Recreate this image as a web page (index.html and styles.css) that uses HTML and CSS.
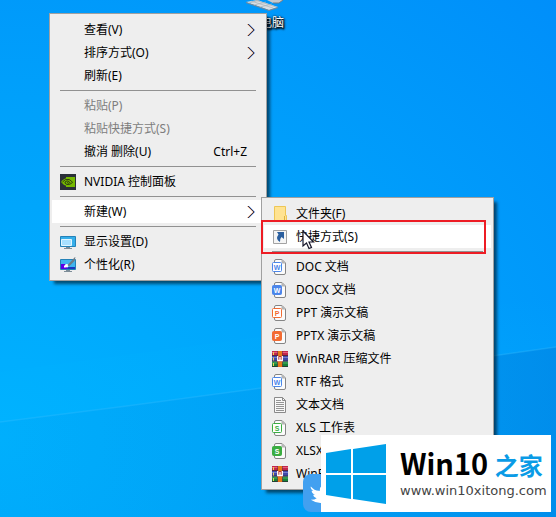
FILE: index.html
```html
<!DOCTYPE html>
<html lang="zh-CN">
<head>
<meta charset="utf-8">
<meta name="viewport" content="width=device-width, initial-scale=1">
<title>新建快捷方式</title>
<link rel="stylesheet" href="styles.css">
</head>
<body>
<svg class="defs" aria-hidden="true">
  <symbol id="chevron" viewBox="0 0 9 14">
    <path d="M.5 1L6.500 7L.5 13" fill="none" stroke="#e08a4a" stroke-width="1"/>
    <path d="M1.500 1L7.500 7L1.500 13" fill="none" stroke="#3f7fe0" stroke-width="1"/>
    <path d="M1 1L7 7L1 13" fill="none" stroke="#2a1c2c" stroke-width=".8"/>
  </symbol>
  <symbol id="page" viewBox="0 0 16 16">
    <path d="M4 .5H10L13.500 4V14Q13.500 15.500 12 15.500H4Q2.500 15.500 2.500 14V2Q2.500 .5 4 .5Z" fill="#fbfbfb" stroke="#858585"/>
    <path d="M9.500 .5V3.500Q9.500 4.500 10.500 4.500H13.500L10 .5Z" fill="#b4b4b4"/>
  </symbol>
  <symbol id="rar" viewBox="0 0 16 16">
    <path d="M0 0H16V5H0Z" fill="#c2264c"/><path d="M0 1H16V2H0Z" fill="#e4607b"/>
    <path d="M0 5H16V10.500H0Z" fill="#4049a8"/><path d="M0 6H16V7H0Z" fill="#737cd0"/>
    <path d="M0 10.500H16V16H0Z" fill="#168238"/><path d="M0 11.500H16V12.500H0Z" fill="#4eb267"/>
    <path d="M0 4.500H16M0 10H16M0 15.500H16" stroke="#2c2430" stroke-width=".7"/>
    <path d="M1 1H2V4H1ZM1 6.500H2V9.500H1ZM1 12H2V15H1Z" fill="#f0cf55"/>
    <path d="M6 0H10V16H6Z" fill="#e87818"/><path d="M5.500 0V16M10.500 0V16" stroke="#6b3040" stroke-width=".6"/>
    <path d="M5 5H11V10.500H5Z" fill="#b8302c"/>
    <path d="M5.700 5V9.500H10.300V5M8 6V9" fill="none" stroke="#fff" stroke-width="1.300"/>
  </symbol>
</svg>
<main class="desktop">
  <svg class="light" viewBox="0 0 556 517" preserveAspectRatio="none" aria-hidden="true">
    <defs>
      <linearGradient id="shade" x1="0" y1="0" x2="1" y2="0"><stop offset="0" stop-color="#0080d0" stop-opacity=".06"/><stop offset=".5" stop-color="#0080d0" stop-opacity=".14"/><stop offset="1" stop-color="#0070c8" stop-opacity=".3"/></linearGradient>
      <linearGradient id="glow" x1="0" y1="0" x2="0" y2="1"><stop offset="0" stop-color="#00b4ff" stop-opacity="0"/><stop offset="1" stop-color="#00b4ff" stop-opacity=".3"/></linearGradient>
    </defs>
    <path d="M0 372L556 297V347Q400 370 261 388T0 422Z" fill="url(#glow)"/>
    <path d="M0 422Q130 406 261 388T556 347V517H0Z" fill="url(#shade)"/>
    <path d="M0 422Q130 406 261 388T556 347" fill="none" stroke="#3cc0ff" stroke-opacity=".3" stroke-width="1.500"/>
  </svg>

  <div class="shortcut">
    <svg width="40" height="12" viewBox="0 0 40 12" aria-hidden="true">
      <path d="M0 2L11 0L32 7L23 10Z" fill="#d9dfe4"/><path d="M0 2L23 10L32 7V8L23 11L0 3Z" fill="#7e878f"/>
      <path d="M5 1L27 8M9 0L30 7M3 3L14 0M8 5L20 2M14 7L26 4" stroke="#a9b1b8" stroke-width=".7"/>
      <path d="M21 0H37L33 3H27Z" fill="#c4c9ce"/><path d="M27 3H33L37 0" fill="none" stroke="#747b82"/>
    </svg>
    <span>此电脑</span>
  </div>

  <ul class="menu menu-main">
    <li><button class="item" type="button"><span class="icon"></span><span class="label">查看(V)</span><svg class="arrow"><use href="#chevron"/></svg></button></li>
    <li><button class="item" type="button"><span class="icon"></span><span class="label">排序方式(O)</span><svg class="arrow"><use href="#chevron"/></svg></button></li>
    <li><button class="item" type="button"><span class="icon"></span><span class="label">刷新(E)</span></button></li>
    <li class="separator"></li>
    <li><button class="item" type="button" disabled><span class="icon"></span><span class="label">粘贴(P)</span></button></li>
    <li><button class="item" type="button" disabled><span class="icon"></span><span class="label">粘贴快捷方式(S)</span></button></li>
    <li><button class="item" type="button"><span class="icon"></span><span class="label">撤消 删除(U)</span><span class="keys">Ctrl+Z</span></button></li>
    <li class="separator"></li>
    <li><button class="item" type="button">
      <svg class="icon" viewBox="0 0 16 16"><path d="M0 0H16V16H0Z" fill="#2b3038"/><path d="M6 3H15V13H6Z" fill="#76b900"/><path d="M1 8Q4 4 8 4Q12 5 14 8Q11 12 7 12Q3 11 1 8Z" fill="#76b900"/><path d="M2.500 8Q5 4.500 9 5.500Q12 7 12.500 8.500Q10 11 7 10.500Q4.500 9.500 5 8Q7 6 9 7.500L10 8.500Q8.500 10 7 8.500" fill="none" stroke="#26330f" stroke-width=".9"/></svg>
      <span class="label">NVIDIA 控制面板</span></button></li>
    <li class="separator"></li>
    <li><button class="item active" type="button" aria-expanded="true"><span class="icon"></span><span class="label">新建(W)</span><svg class="arrow"><use href="#chevron"/></svg></button></li>
    <li class="separator"></li>
    <li><button class="item" type="button">
      <svg class="icon" viewBox="0 0 16 16"><path d="M.5 2.500H15.500V12.500H.5Z" fill="#35aeea" stroke="#2482b8"/><path d="M1.500 5.500H11.500V11.500H1.500Z" fill="#a7e0ff" stroke="#e0f5ff"/><path d="M6 13H10V14H12V15H4V14H6Z" fill="#7d8d98"/></svg>
      <span class="label">显示设置(D)</span></button></li>
    <li><button class="item" type="button">
      <svg class="icon" viewBox="0 0 16 16"><path d="M.5 2.500H15.500V12.500H.5Z" fill="#3fb5ef" stroke="#2482b8"/><path d="M1 7H5L8 12H1Z" fill="#5a00e6"/><path d="M8 10H15V12H7Z" fill="#1a38bd"/><path d="M4 9Q6 6 8.500 7.500Q9.500 11 4 10.500Z" fill="#fff"/><path d="M7.500 8L15.500 -.5L14.500 4L9 9.500Z" fill="#6c7c88"/><path d="M6 13H10V14H12V15H4V14H6Z" fill="#7d8d98"/></svg>
      <span class="label">个性化(R)</span></button></li>
  </ul>

  <ul class="menu menu-new">
    <li><button class="item" type="button">
      <svg class="icon" viewBox="0 0 16 16"><path d="M2.500 .5H13.500V9.500H14.500V15.500H2.500Z" fill="#ffe391" stroke="#edc655"/><path d="M12.500 10V15.500" stroke="#dfb33f"/></svg>
      <span class="label">文件夹(F)</span></button></li>
    <li><button class="item active" type="button">
      <svg class="icon" viewBox="0 0 16 16"><path d="M1.500 1.500H14.500V14.500H1.500Z" fill="#f5f5f5" stroke="#a3a3a3"/><path d="M5 3H12V10L9.500 8Q7.500 10 8 13Q3 10 6.500 5.500Z" fill="#2b5f9f"/></svg>
      <span class="label">快捷方式(S)</span></button></li>
    <li class="separator"></li>
    <li><button class="item" type="button"><svg class="icon blue" viewBox="0 0 16 16"><use href="#page"/><rect class="outline" x=".5" y="3.500" width="9" height="9" rx="1"/><text x="5" y="10.500">W</text></svg><span class="label">DOC 文档</span></button></li>
    <li><button class="item" type="button"><svg class="icon blue" viewBox="0 0 16 16"><use href="#page"/><rect class="solid" x=".5" y="3.500" width="9" height="9" rx="1"/><text class="light-letter" x="5" y="10.500">W</text></svg><span class="label">DOCX 文档</span></button></li>
    <li><button class="item" type="button"><svg class="icon orange" viewBox="0 0 16 16"><use href="#page"/><rect class="outline" x=".5" y="3.500" width="9" height="9" rx="1"/><text x="5" y="10.500">P</text></svg><span class="label">PPT 演示文稿</span></button></li>
    <li><button class="item" type="button"><svg class="icon orange" viewBox="0 0 16 16"><use href="#page"/><rect class="solid" x=".5" y="3.500" width="9" height="9" rx="1"/><text class="light-letter" x="5" y="10.500">P</text></svg><span class="label">PPTX 演示文稿</span></button></li>
    <li><button class="item" type="button"><svg class="icon"><use href="#rar"/></svg><span class="label">WinRAR 压缩文件</span></button></li>
    <li><button class="item" type="button"><svg class="icon blue" viewBox="0 0 16 16"><use href="#page"/><rect class="outline" x=".5" y="3.500" width="9" height="9" rx="1"/><text x="5" y="10.500">W</text></svg><span class="label">RTF 格式</span></button></li>
    <li><button class="item" type="button"><svg class="icon" viewBox="0 0 16 16"><path d="M2.500 .5H10.500L13.500 3.500V15.500H2.500Z" fill="#f8f8f8" stroke="#8a8a8a"/><path d="M10.500 .5V3.500H13.500" fill="none" stroke="#8a8a8a"/><path d="M4 3.500H9M4 5.500H12M4 7.500H12M4 9.500H12M4 11.500H12M4 13.500H12" stroke="#949494"/></svg><span class="label">文本文档</span></button></li>
    <li><button class="item" type="button"><svg class="icon green" viewBox="0 0 16 16"><use href="#page"/><rect class="outline" x=".5" y="3.500" width="9" height="9" rx="1"/><text x="5" y="10.500">S</text></svg><span class="label">XLS 工作表</span></button></li>
    <li><button class="item" type="button"><svg class="icon green" viewBox="0 0 16 16"><use href="#page"/><rect class="solid" x=".5" y="3.500" width="9" height="9" rx="1"/><text class="light-letter" x="5" y="10.500">S</text></svg><span class="label">XLSX</span></button></li>
    <li><button class="item" type="button"><svg class="icon"><use href="#rar"/></svg><span class="label">WinRAR</span></button></li>
  </ul>

  <div class="highlight-box"></div>
  <svg class="pointer" viewBox="0 0 13 20" aria-hidden="true"><path d="M1 1V16L4.500 13L7 18.500L9.500 17.500L7 12H11.500Z" fill="#fff" stroke="#17172b" stroke-width="1.200"/></svg>

  <div class="bird">
    <svg viewBox="0 0 24 24" aria-hidden="true"><path d="M1 3Q6 9 12 8Q11 2 17 2L24 5V20Q11 26 1 19Q6 19 8 17Q4 16 4 13H6Q2 11 2 8H4Q0 6 1 3Z" fill="#fff"/></svg>
  </div>
  <div class="brand">
    <svg class="brand-logo" viewBox="0 0 60 60" aria-hidden="true"><path d="M0 9L25 5V29H0ZM27 5L60 0V29H27ZM0 31H25V55L0 51ZM27 31H60V60L27 55Z" fill="#00a0e9"/></svg>
    <div class="brand-text">
      <strong class="brand-name">Win10 <span>之家</span></strong>
      <span class="brand-url">www.win10xitong.com</span>
    </div>
  </div>
</main>
</body>
</html>
```
FILE: styles.css
```css
* {
  box-sizing: border-box;
}

body {
  margin: 0;
  font: 12px/22px "Noto Sans", "Noto Sans CJK SC", sans-serif;
  color: #000;
}

.defs {
  position: absolute;
  width: 0;
  height: 0;
}

.desktop {
  position: relative;
  min-height: 100vh;
  overflow: hidden;
  background: radial-gradient(ellipse at 0 85%, #00b2ff 0%, #00a2fb 50%, #008ffa 100%);
}

.light {
  position: absolute;
  inset: 0;
  width: 100%;
  height: 100%;
}

.shortcut {
  position: absolute;
  left: 244px;
  top: 0;
  width: 44px;
  display: flex;
  flex-direction: column;
  align-items: center;
  color: #fff;
  text-shadow: 1px 1px 2px #000, 0 0 2px #000, 1px 2px 2px #000;
}

.menu {
  position: absolute;
  margin: 0;
  padding: 4px 2px;
  list-style: none;
  background: #eee;
  border: 1px solid #a0a0a0;
  box-shadow: 4px 4px 3px -1px rgba(0, 0, 0, 0.55);
}

.menu-main {
  left: 49px;
  top: 13px;
  width: 218px;
}

.menu-new {
  left: 261px;
  top: 197px;
  width: 233px;
}

.item {
  display: flex;
  align-items: center;
  gap: 8px;
  width: 100%;
  height: 23px;
  padding: 0 8px;
  border: 0;
  background: none;
  font: inherit;
  color: inherit;
  text-align: left;
  white-space: nowrap;
}

.item.active {
  background: #fff;
}

.item:disabled {
  color: #7d7d7d;
}

.icon {
  flex: none;
  width: 16px;
  height: 16px;
}

.label {
  flex: 1;
}

.keys {
  padding-right: 9px;
}

.arrow {
  flex: none;
  width: 9px;
  height: 14px;
}

.separator {
  height: 7px;
  padding: 3px 8px;
}

.separator::before {
  content: "";
  display: block;
  height: 1px;
  background: #919191;
}

.blue {
  --tone: #4b86ea;
}

.orange {
  --tone: #f26b32;
}

.green {
  --tone: #3bad42;
}

.outline {
  fill: #fff;
  stroke: var(--tone);
}

.solid {
  fill: var(--tone);
  stroke: var(--tone);
}

.icon text {
  font: bold 7px "Liberation Sans", sans-serif;
  text-anchor: middle;
  fill: var(--tone);
}

.icon .light-letter {
  fill: #fff;
}

.highlight-box {
  position: absolute;
  left: 261px;
  top: 220px;
  width: 225px;
  height: 34px;
  border: 2px solid #ed1c24;
}

.pointer {
  position: absolute;
  left: 302px;
  top: 230px;
  width: 13px;
  height: 20px;
}

.bird {
  position: absolute;
  left: 303px;
  top: 474px;
  width: 38px;
  height: 38px;
  padding: 10px 5px;
  border-radius: 8px;
  background: #42a0f0;
}

.bird svg {
  display: block;
  width: 24px;
  height: 20px;
}

.brand {
  position: absolute;
  left: 321px;
  top: 435px;
  display: flex;
  align-items: center;
  gap: 14px;
  width: 230px;
  height: 77px;
  padding: 0 5px;
  background: #fff;
}

.brand-logo {
  flex: none;
  width: 60px;
  height: 60px;
}

.brand-text {
  display: flex;
  flex-direction: column;
  white-space: nowrap;
}

.brand-name {
  font: bold 29px/32px "Noto Sans CJK SC", sans-serif;
}

.brand-name span {
  font-size: 24px;
  color: #0a9be6;
}

.brand-url {
  font: 13px/20px "DejaVu Sans", sans-serif;
  color: #444;
}
```
